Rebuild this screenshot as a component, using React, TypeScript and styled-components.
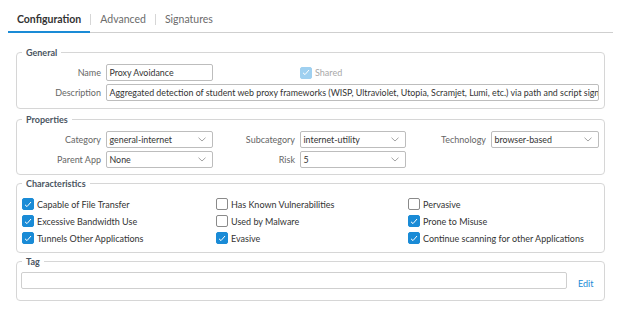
import styled, { createGlobalStyle } from "styled-components";

const GlobalStyle = createGlobalStyle`
  html, body {
    margin: 0;
    padding: 0;
    background: #ffffff;
  }
  body {
    font-family: Lato, "Open Sans", "Liberation Sans", sans-serif;
    color: #333333;
  }
`;

const Page = styled.div`
  width: 605px;
  margin-left: 8px;
  padding-top: 11px;
`;

const TabBar = styled.div`
  display: flex;
  align-items: center;
  border-bottom: 1px solid #cfcfcf;
  height: 21px;
`;

const Tab = styled.div<{ $active?: boolean }>`
  height: 100%;
  box-sizing: border-box;
  padding: 0 9px 4px;
  font-size: 10.5px;
  font-weight: ${(p) => (p.$active ? 700 : 400)};
  color: ${(p) => (p.$active ? "#333333" : "#6b6b6b")};
  border-bottom: 2px solid ${(p) => (p.$active ? "#1a8bd6" : "transparent")};
  margin-bottom: -1px;
  display: flex;
  align-items: center;
`;

const TabSep = styled.span`
  width: 1px;
  height: 11px;
  margin-bottom: 4px;
  background: #d6d6d6;
`;

const Section = styled.fieldset<{ $gap: number }>`
  margin: ${(p) => p.$gap}px 8px 0;
  border: 1px solid #d6d6d6;
  border-radius: 4px;
  padding: 1px 5px 5px 4px;
  min-width: 0;
`;

const Legend = styled.legend`
  padding: 0 4px;
  margin-left: 1px;
  font-size: 9px;
  font-weight: 700;
  color: #4a5561;
  line-height: 11px;
`;

const FieldGrid = styled.div<{ $top: number; $bottom: number }>`
  display: grid;
  grid-template-columns: 80px 107px 77px 106px 75px 108px;
  column-gap: 5px;
  row-gap: 3px;
  align-items: center;
  padding: ${(p) => p.$top}px 0 ${(p) => p.$bottom}px;
`;

const Label = styled.div`
  font-size: 9px;
  color: #666666;
  text-align: right;
  white-space: nowrap;
`;

const TextBox = styled.div<{ $span?: number }>`
  grid-column: ${(p) => (p.$span ? `span ${p.$span}` : "auto")};
  height: 17px;
  box-sizing: border-box;
  border: 1px solid #bdbdbd;
  border-radius: 2px;
  padding: 0 3px 0 2.5px;
  font-size: 8.85px;
  color: #333333;
  display: flex;
  align-items: center;
  white-space: nowrap;
  overflow: hidden;
`;

const Select = styled(TextBox)`
  justify-content: space-between;
  padding-right: 6px;
`;

const Chevron = () => (
  <svg width="8" height="5" viewBox="0 0 8 5">
    <path d="M0.5 0.7 L4 4 L7.5 0.7" fill="none" stroke="#9a9a9a" strokeWidth="0.9" />
  </svg>
);

const Box = styled.span<{ $checked?: boolean; $disabled?: boolean }>`
  flex: none;
  width: 12px;
  height: 12px;
  box-sizing: border-box;
  border-radius: 2px;
  border: 1px solid
    ${(p) => (p.$checked ? (p.$disabled ? "#9fd0f0" : "#1a8bd6") : "#8a8a8a")};
  background: ${(p) => (p.$checked ? (p.$disabled ? "#9fd0f0" : "#1a8bd6") : "#ffffff")};
  display: flex;
  align-items: center;
  justify-content: center;
`;

const Check = ({ checked, disabled }: { checked?: boolean; disabled?: boolean }) => (
  <Box $checked={checked} $disabled={disabled}>
    {checked && (
      <svg width="8" height="7" viewBox="0 0 8 7">
        <path d="M1 3.8 L3 5.6 L7 1" fill="none" stroke="#ffffff" strokeWidth="1" />
      </svg>
    )}
  </Box>
);

const CheckItem = styled.label<{ $muted?: boolean }>`
  display: flex;
  align-items: center;
  gap: 3px;
  height: 12px;
  font-size: 9px;
  color: ${(p) => (p.$muted ? "#a8a8a8" : "#333333")};
  white-space: nowrap;
`;

const CheckGrid = styled.div`
  display: grid;
  grid-template-columns: 194px 192px 1fr;
  row-gap: 5px;
  padding: 8px 0 3px 1px;
`;

const TagRow = styled.div`
  display: flex;
  align-items: center;
  gap: 11px;
  padding: 4px 0 6px;
`;

const TagInput = styled.div`
  width: 546px;
  height: 17px;
  box-sizing: border-box;
  border: 1px solid #cfcfcf;
  border-radius: 2px;
`;

const EditLink = styled.a`
  font-size: 9px;
  color: #1a8bd6;
  margin-top: 6px;
`;

const characteristics: [string, boolean][] = [
  ["Capable of File Transfer", true],
  ["Has Known Vulnerabilities", false],
  ["Pervasive", false],
  ["Excessive Bandwidth Use", true],
  ["Used by Malware", false],
  ["Prone to Misuse", true],
  ["Tunnels Other Applications", true],
  ["Evasive", true],
  ["Continue scanning for other Applications", true],
];

export default function App() {
  return (
    <>
      <GlobalStyle />
      <Page>
        <TabBar>
          <Tab $active>Configuration</Tab>
          <TabSep />
          <Tab>Advanced</Tab>
          <TabSep />
          <Tab>Signatures</Tab>
        </TabBar>

        <Section $gap={14}>
          <Legend>General</Legend>
          <FieldGrid $top={5} $bottom={2}>
            <Label>Name</Label>
            <TextBox>Proxy Avoidance</TextBox>
            <span />
            <CheckItem $muted>
              <Check checked disabled />
              Shared
            </CheckItem>
            <span />
            <span />
            <Label>Description</Label>
            <TextBox $span={5}>
              Aggregated detection of student web proxy frameworks (WISP, Ultraviolet, Utopia,
              Scramjet, Lumi, etc.) via path and script signatures
            </TextBox>
          </FieldGrid>
        </Section>

        <Section $gap={5}>
          <Legend>Properties</Legend>
          <FieldGrid $top={5} $bottom={1}>
            <Label>Category</Label>
            <Select>
              general-internet
              <Chevron />
            </Select>
            <Label>Subcategory</Label>
            <Select>
              internet-utility
              <Chevron />
            </Select>
            <Label>Technology</Label>
            <Select>
              browser-based
              <Chevron />
            </Select>
            <Label>Parent App</Label>
            <Select>
              None
              <Chevron />
            </Select>
            <Label>Risk</Label>
            <Select>
              5
              <Chevron />
            </Select>
          </FieldGrid>
        </Section>

        <Section $gap={3}>
          <Legend>Characteristics</Legend>
          <CheckGrid>
            {characteristics.map(([name, on]) => (
              <CheckItem key={name}>
                <Check checked={on} />
                {name}
              </CheckItem>
            ))}
          </CheckGrid>
        </Section>

        <Section $gap={3}>
          <Legend>Tag</Legend>
          <TagRow>
            <TagInput />
            <EditLink>Edit</EditLink>
          </TagRow>
        </Section>
      </Page>
    </>
  );
}
